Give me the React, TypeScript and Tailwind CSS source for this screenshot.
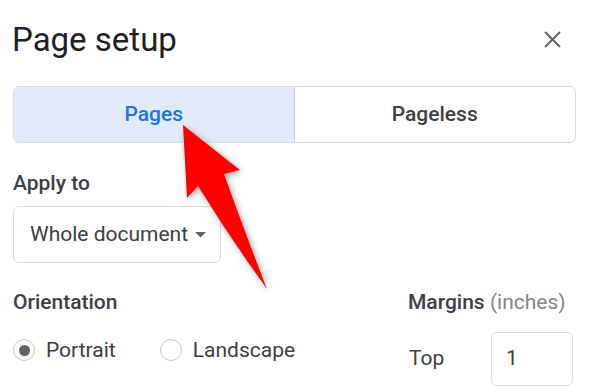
function Radio({ checked, label }: { checked?: boolean; label: string }) {
	return (
		<label className="flex h-[28px] items-center gap-[11px]">
			<span className="flex h-[22px] w-[22px] items-center justify-center rounded-full border border-[#c4c7c5] bg-white">
				{checked && <span className="h-[11px] w-[11px] rounded-full bg-[#5f6368]" />}
			</span>
			<span className="text-[21px] leading-[28px] text-[#3c4043]">{label}</span>
		</label>
	);
}

export default function App() {
	return (
		<div className="relative h-[390px] w-[607px] overflow-hidden bg-white font-['Roboto','Open_Sans',sans-serif]">
			<div className="flex items-center justify-between pl-[12px] pr-[46px] pt-[20px]">
				<h1 className="text-[33px] leading-[40px] text-[#202124]">Page setup</h1>
				<svg width="17" height="17" viewBox="0 0 17 17" className="mt-[-2px]">
					<path d="M1 1 L16 16 M16 1 L1 16" stroke="#5f6368" strokeWidth="2" />
				</svg>
			</div>

			{/* Pages / Pageless toggle */}
			<div className="ml-[13px] mr-[31px] mt-[26px] grid h-[57px] grid-cols-2 overflow-hidden rounded-[6px] border border-[#dadce0]">
				<div className="flex items-center justify-center border-r border-[#aecbfa] bg-[#e1ebfc] text-[21px] font-medium text-[#1a73e8]">
					Pages
				</div>
				<div className="flex items-center justify-center text-[21px] font-medium text-[#3c4043]">
					Pageless
				</div>
			</div>

			<div className="pl-[13px] pt-[26px]">
				<div className="text-[21px] font-medium leading-[28px] text-[#3c4043]">Apply to</div>
				<div className="mt-[9px] flex h-[57px] w-[208px] items-center justify-between rounded-[6px] border border-[#dadce0] pl-[16px] pr-[14px]">
					<span className="text-[21px] text-[#3c4043]">Whole document</span>
					<svg width="11" height="6" viewBox="0 0 11 6">
						<path d="M0 0 L11 0 L5.5 5.5 Z" fill="#5f6368" />
					</svg>
				</div>
			</div>

			<div className="flex justify-between pl-[13px] pr-[34px] pt-[25px]">
				<div>
					<div className="text-[21px] font-medium leading-[28px] text-[#3c4043]">Orientation</div>
					<div className="mt-[20px] flex gap-[44px]">
						<Radio checked label="Portrait" />
						<Radio label="Landscape" />
					</div>
				</div>
				<div>
					<div className="text-[21px] leading-[28px] text-[#3c4043]">
						<span className="font-medium">Margins</span>{" "}
						<span className="text-[#80868b]">(inches)</span>
					</div>
					<div className="mt-[16px] flex items-center">
						<span className="w-[83px] pl-[1px] text-[21px] text-[#3c4043]">Top</span>
						<div className="flex h-[54px] w-[82px] items-center rounded-[6px] border border-[#dadce0] pl-[14px] text-[21px] text-[#3c4043]">
							1
						</div>
					</div>
				</div>
			</div>

			{/* red callout arrow */}
			<svg
				className="pointer-events-none absolute left-0 top-0"
				width="607"
				height="390"
				viewBox="0 0 607 390"
			>
				<defs>
					<filter id="sh" x="-20%" y="-20%" width="140%" height="140%">
						<feDropShadow dx="2" dy="2" stdDeviation="3" floodColor="#000" floodOpacity="0.35" />
					</filter>
				</defs>
				<path
					d="M183 125 L240 170 L224 174 Q244 230 267 289 Q230 238 198 186 L187 198 Z"
					fill="#ff0000"
					filter="url(#sh)"
				/>
			</svg>
		</div>
	);
}
